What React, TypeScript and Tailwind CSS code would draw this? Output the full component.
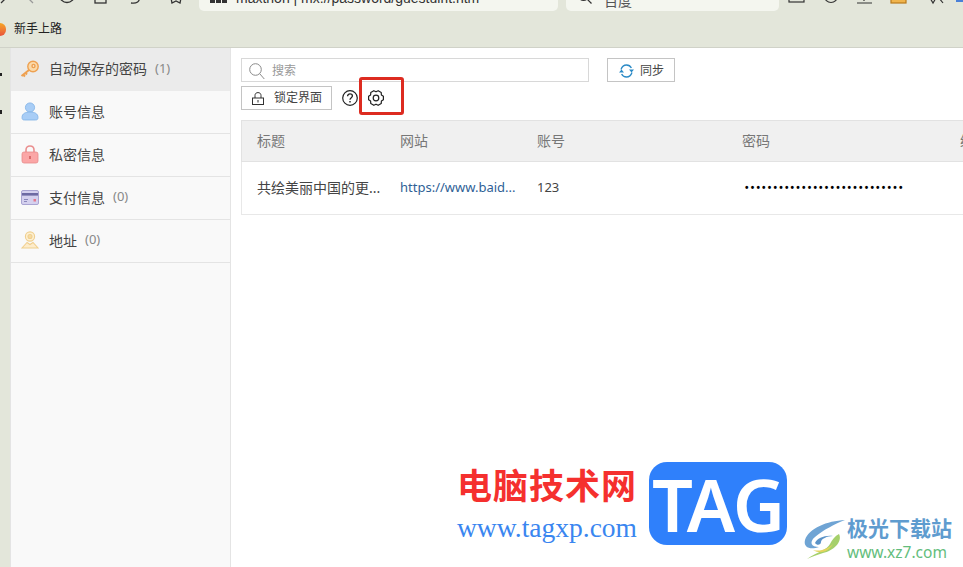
const cjk = "font-['Noto_Sans','Noto_Sans_CJK_SC',sans-serif]";

function KeyIcon() {
  return (
    <svg width="20" height="18" viewBox="0 0 20 18" fill="none" stroke="#eea050" strokeWidth="1.4">
      <circle cx="13" cy="6.5" r="5.2" fill="#fbd9a8" />
      <circle cx="13.5" cy="6" r="1.5" fill="#fff" />
      <path d="M9 10 L1.5 16 M3 14.5 L5 16.5 M5.5 13 L7 14.5" strokeWidth="2" />
    </svg>
  );
}

function UserIcon() {
  return (
    <svg width="18" height="19" viewBox="0 0 18 19" fill="#a8cdf6" stroke="#7fb1e6" strokeWidth="0.8">
      <circle cx="9" cy="5.5" r="4.6" />
      <path d="M1 15.5 C1 11.5 4.5 10 9 10 C13.5 10 17 11.5 17 15.5 C17 17.5 16 18 14.5 18 L3.5 18 C2 18 1 17.5 1 15.5 Z" />
    </svg>
  );
}

function PrivateIcon() {
  return (
    <svg width="18" height="19" viewBox="0 0 18 19" fill="none">
      <path d="M5 8 L5 5 C5 2.4 6.6 1 9 1 C11.4 1 13 2.4 13 5 L13 8" stroke="#ea8f8f" strokeWidth="1.6" />
      <rect x="1" y="7" width="16" height="11" rx="2" fill="#fba6a6" stroke="#e98c8c" strokeWidth="0.8" />
      <rect x="8" y="11" width="2" height="3" fill="#d96b6b" />
    </svg>
  );
}

function CardIcon() {
  return (
    <svg width="18" height="15" viewBox="0 0 18 15" fill="none">
      <rect x="0.5" y="0.5" width="17" height="14" rx="1.5" fill="#d4d0ee" stroke="#a9a4d2" />
      <rect x="1" y="3" width="16" height="2.6" fill="#6d6aa3" />
      <rect x="3" y="9" width="4" height="1" fill="#8a87ba" />
      <rect x="3" y="11" width="3" height="1" fill="#8a87ba" />
      <rect x="12.5" y="9" width="2.5" height="2.5" fill="#e3778c" />
    </svg>
  );
}

function PinIcon() {
  return (
    <svg width="18" height="18" viewBox="0 0 18 18" fill="none" stroke="#f0cf8e" strokeWidth="1.1">
      <circle cx="9" cy="5.5" r="4.6" fill="#fdf0d2" />
      <circle cx="9" cy="5.5" r="2" fill="#f7dca4" />
      <path d="M6 11.5 L1 17 L17 17 L12 11.5 L9 13.5 Z" fill="#fdeccb" />
    </svg>
  );
}

function SearchIcon() {
  return (
    <svg width="16" height="17" viewBox="0 0 16 17" fill="none" stroke="#8a8a8a" strokeWidth="1">
      <circle cx="6.5" cy="6.5" r="5.8" />
      <path d="M10.7 10.7 L15.3 16" />
    </svg>
  );
}

function SyncIcon() {
  return (
    <svg width="15" height="14" viewBox="0 0 15 14" fill="none" stroke="#2b8ac6" strokeWidth="1.3">
      <path d="M2 5.5 C3 2.5 5 1 7.5 1 C9.6 1 11.4 2 12.4 4" />
      <path d="M13 8.5 C12 11.5 10 13 7.5 13 C5.4 13 3.6 12 2.6 10" />
      <path d="M10 5.6 L15 5.6 L12.5 8.4 Z" fill="#2b8ac6" stroke="none" />
      <path d="M0 8.4 L5 8.4 L2.5 5.6 Z" fill="#2b8ac6" stroke="none" />
    </svg>
  );
}

function LockIcon() {
  return (
    <svg width="12" height="13" viewBox="0 0 12 13" fill="none" stroke="#333" strokeWidth="1">
      <path d="M3 6 L3 3.5 C3 1.6 4.2 0.6 6 0.6 C7.8 0.6 9 1.6 9 3.5 L9 6" />
      <rect x="0.5" y="6" width="11" height="6.5" />
      <rect x="5.5" y="8" width="1" height="2.5" fill="#333" stroke="none" />
    </svg>
  );
}

function HelpIcon() {
  return (
    <svg width="16" height="16" viewBox="0 0 16 16" fill="none" stroke="#222" strokeWidth="1.2">
      <circle cx="8" cy="8" r="7.3" />
      <path d="M5.6 6.2 C5.6 4.7 6.7 3.9 8 3.9 C9.4 3.9 10.4 4.8 10.4 6 C10.4 7.6 8 7.8 8 9.8" strokeWidth="1.3" />
      <rect x="7.3" y="11" width="1.4" height="1.5" fill="#222" stroke="none" />
    </svg>
  );
}

function GearIcon() {
  return (
    <svg width="16" height="16" viewBox="0 0 16 16" fill="none" stroke="#222" strokeWidth="1.2" strokeLinejoin="round">
      <path d="M15.4 6.3 L15.4 9.7 L13.4 11.1 L13.2 13.6 L10.2 15.3 L8 14.2 L5.8 15.3 L2.8 13.6 L2.6 11.1 L0.6 9.7 L0.6 6.3 L2.6 4.9 L2.8 2.4 L5.8 0.7 L8 1.8 L10.2 0.7 L13.2 2.4 L13.4 4.9 Z" />
      <circle cx="8" cy="8" r="2.8" />
    </svg>
  );
}

function Swirl() {
  return (
    <svg width="44" height="42" viewBox="0 0 44 42" fill="none">
      <path d="M42 2 C24 3 6 10 2 22 C0 30 8 32 16 29 C8 29 6 24 12 19 C20 12 32 6 42 2 Z" fill="#6fa4d4" />
      <path d="M12 25 C14 20 22 17 30 18 C24 18 18 21 18 24 C18 27 14 28 12 25 Z" fill="#5b93c8" />
      <path d="M36 16 C40 24 30 33 20 35 C14 37 8 39 4 41 C14 34 24 32 27 26 C29 22 32 18 36 16 Z" fill="#a5d06b" />
      <path d="M10 32 C18 34 26 30 30 26 C26 33 18 37 10 32 Z" fill="#e3d45c" />
    </svg>
  );
}

const menu = [
  { label: '自动保存的密码', count: '(1)', icon: <KeyIcon />, active: true },
  { label: '账号信息', icon: <UserIcon /> },
  { label: '私密信息', icon: <PrivateIcon /> },
  { label: '支付信息', count: '(0)', icon: <CardIcon /> },
  { label: '地址', count: '(0)', icon: <PinIcon /> },
];

function BrowserBar() {
  return (
    <div className="h-[48px] bg-[#e3e6da] border-b border-[#d0d2c8] flex flex-col shrink-0">
      <div className="h-[11px] flex items-end relative overflow-hidden text-[#333] text-[14px]">
        <div className="w-[199px] h-[11px] overflow-hidden shrink-0">
          <svg width="190" height="11" viewBox="0 0 190 11" fill="none" stroke="#333" strokeWidth="1.3">
            <path d="M5 -1 L1 3" />
            <path d="M29 -1 L33 3" stroke="#999" />
            <circle cx="67" cy="-5" r="7.5" />
            <rect x="95" y="-5" width="11" height="8" />
            <path d="M131 3 C137 4 140 1 139 -2" />
            <path d="M171 -2 L172 3 L176 1 L180 3 L181 -2" />
          </svg>
        </div>
        <div className="w-[359px] h-[11px] bg-[#f4f6ef] rounded-b-[5px] shrink-0 flex items-end pl-[11px] overflow-hidden">
          <div className="flex gap-[1px] mb-[8px] mr-[9px]">
            <span className="w-[5px] h-[3px] bg-[#333]" />
            <span className="w-[5px] h-[3px] bg-[#333]" />
            <span className="w-[5px] h-[3px] bg-[#333]" />
          </div>
          <span className="font-['Liberation_Sans',sans-serif] leading-[13px] mb-[6px] whitespace-nowrap">maxthon | mx://password/guestuirit.htm</span>
        </div>
        <div className="w-[213px] h-[11px] bg-[#f4f6ef] rounded-b-[5px] ml-[8px] shrink-0 flex items-end pl-[12px] overflow-hidden">
          <svg width="14" height="14" viewBox="0 0 14 14" fill="none" stroke="#333" strokeWidth="1.2" className="mb-[7px] mr-[12px]">
            <circle cx="5.5" cy="5.5" r="5" />
            <path d="M9 9 L13.5 13.5" />
          </svg>
          <span className={`${cjk} leading-[14px] mb-[3px] text-[#555]`}>百度</span>
        </div>
        <div className="flex-1 h-[11px] overflow-hidden">
          <svg width="184" height="11" viewBox="0 0 184 11" fill="none" stroke="#333" strokeWidth="1.2">
            <rect x="10" y="-7" width="15" height="9" />
            <circle cx="52" cy="-4" r="6.5" />
            <path d="M85 -4 L85 1 M78 3 L93 3" />
            <rect x="112" y="-4" width="15" height="7" fill="#f0b44c" stroke="#b97a1c" />
            <path d="M151 -2 L154 3 L157 -2 M160 -2 L164 3" />
            <rect x="177" y="-2" width="7" height="4" fill="#4a80d8" stroke="none" />
          </svg>
        </div>
      </div>
      <div className="flex-1 flex items-center">
        <span className="w-[6px] h-[13px] rounded-r-full bg-gradient-to-b from-[#f5a623] to-[#e8503a] mr-[8px]" />
        <span className={`${cjk} text-[12px] text-[#222]`}>新手上路</span>
      </div>
    </div>
  );
}

function Sidebar() {
  return (
    <aside className="w-[221px] ml-[10px] bg-[#f9f9f9] border-l border-r border-[#e4e4e4] shrink-0">
      {menu.map((item) => (
        <div
          key={item.label}
          className={`h-[43px] flex items-center pl-[9px] pb-[2px] ${item.active ? 'bg-[#ebebeb]' : 'border-b border-[#e4e4e4]'}`}
        >
          <span className="w-[20px] flex justify-center shrink-0">{item.icon}</span>
          <span className="ml-[9px] text-[14px] text-[#444]">{item.label}</span>
          {item.count && <span className="ml-[8px] text-[13px] text-[#888]">{item.count}</span>}
        </div>
      ))}
    </aside>
  );
}

function Toolbar() {
  return (
    <div className="relative">
      <div className="flex">
        <div className="w-[348px] h-[24px] border border-[#d8d8d8] flex items-center pl-[7px] pt-[2px]">
          <SearchIcon />
          <span className="ml-[7px] text-[12px] text-[#999]">搜索</span>
        </div>
        <button className="ml-[18px] w-[68px] h-[24px] border border-[#c4c4c4] flex items-center pl-[11px] pt-[2px] gap-[6px] text-[12px] text-[#444]">
          <SyncIcon />
          同步
        </button>
      </div>
      <div className="flex items-center mt-[4px]">
        <button className="w-[91px] h-[24px] border border-[#c4c4c4] flex items-center pl-[10px] gap-[10px] text-[12px] text-[#444]">
          <LockIcon />
          锁定界面
        </button>
        <span className="ml-[10px]"><HelpIcon /></span>
        <span className="ml-[10px]"><GearIcon /></span>
      </div>
      <div className="absolute left-[118px] top-[19px] w-[45px] h-[38px] border-[3px] border-[#dd2b20] rounded-[3px]" />
    </div>
  );
}

function Table() {
  return (
    <div className="mt-[10px] w-[760px] text-[14px]">
      <div className="h-[42px] bg-[#f0f0f0] border-t border-b border-l border-[#e2e2e2] flex items-center pb-[2px] text-[#777]">
        <span className="w-[158px] pl-[15px]">标题</span>
        <span className="w-[137px]">网站</span>
        <span className="w-[205px]">账号</span>
        <span className="w-[218px]">密码</span>
        <span>编辑</span>
      </div>
      <div className="h-[53px] border-b border-l border-[#e8e8e8] flex items-center text-[#444]">
        <span className="w-[158px] pl-[15px] -mt-[2px] whitespace-nowrap">共绘美丽中国的更...</span>
        <span className="w-[137px] text-[#2f5f96] text-[13px] font-['Noto_Sans',sans-serif]">https://www.baid...</span>
        <span className="w-[205px] text-[13px]">123</span>
        <span className="pl-[3px] text-[10px] font-bold text-black tracking-[2.2px] font-['Liberation_Sans',sans-serif] leading-none">
          ••••••••••••••••••••••••••••
        </span>
      </div>
    </div>
  );
}

export default function App() {
  return (
    <div className={`${cjk} relative w-[963px] h-[567px] overflow-hidden bg-white flex flex-col`}>
      <BrowserBar />
      <div className="flex-1 flex bg-white relative">
        <div className="absolute left-0 top-0 bottom-0 w-[10px] bg-[#e3e6da]">
          <span className="absolute left-0 top-[25px] w-[2px] h-[3px] bg-[#222]" />
          <span className="absolute left-0 top-[62px] w-[2px] h-[4px] bg-[#222]" />
        </div>
        <Sidebar />
        <main className="flex-1 pl-[10px] pt-[10px] min-w-0 overflow-hidden">
          <Toolbar />
          <Table />
        </main>
      </div>

      <div className="absolute left-[457px] top-[465px] flex flex-col items-start">
        <span className="text-[35px] leading-[42px] font-bold text-[#f5302e] tracking-[1px] whitespace-nowrap">电脑技术网</span>
        <span className="text-[27.5px] leading-[42px] text-[#3a86f0] font-['Liberation_Serif',serif] whitespace-nowrap">www.tagxp.com</span>
      </div>
      <div className="absolute left-[649px] top-[462px] w-[138px] h-[83px] rounded-[18px] bg-[#2f80fb] flex items-center justify-center text-white font-semibold text-[72px] leading-none font-['Noto_Sans',sans-serif] tracking-[-1px]">
        TAG
      </div>
      <div className="absolute left-[803px] top-[516px] flex items-start">
        <span className="mt-[2px]"><Swirl /></span>
        <div className="flex flex-col">
          <span className="text-[21px] leading-[24px] font-bold text-[#5f9ccf] whitespace-nowrap">极光下载站</span>
          <span className="text-[15.5px] leading-[24px] text-[#63bd7c] font-['Noto_Sans',sans-serif] whitespace-nowrap">www.xz7.com</span>
        </div>
      </div>
    </div>
  );
}
